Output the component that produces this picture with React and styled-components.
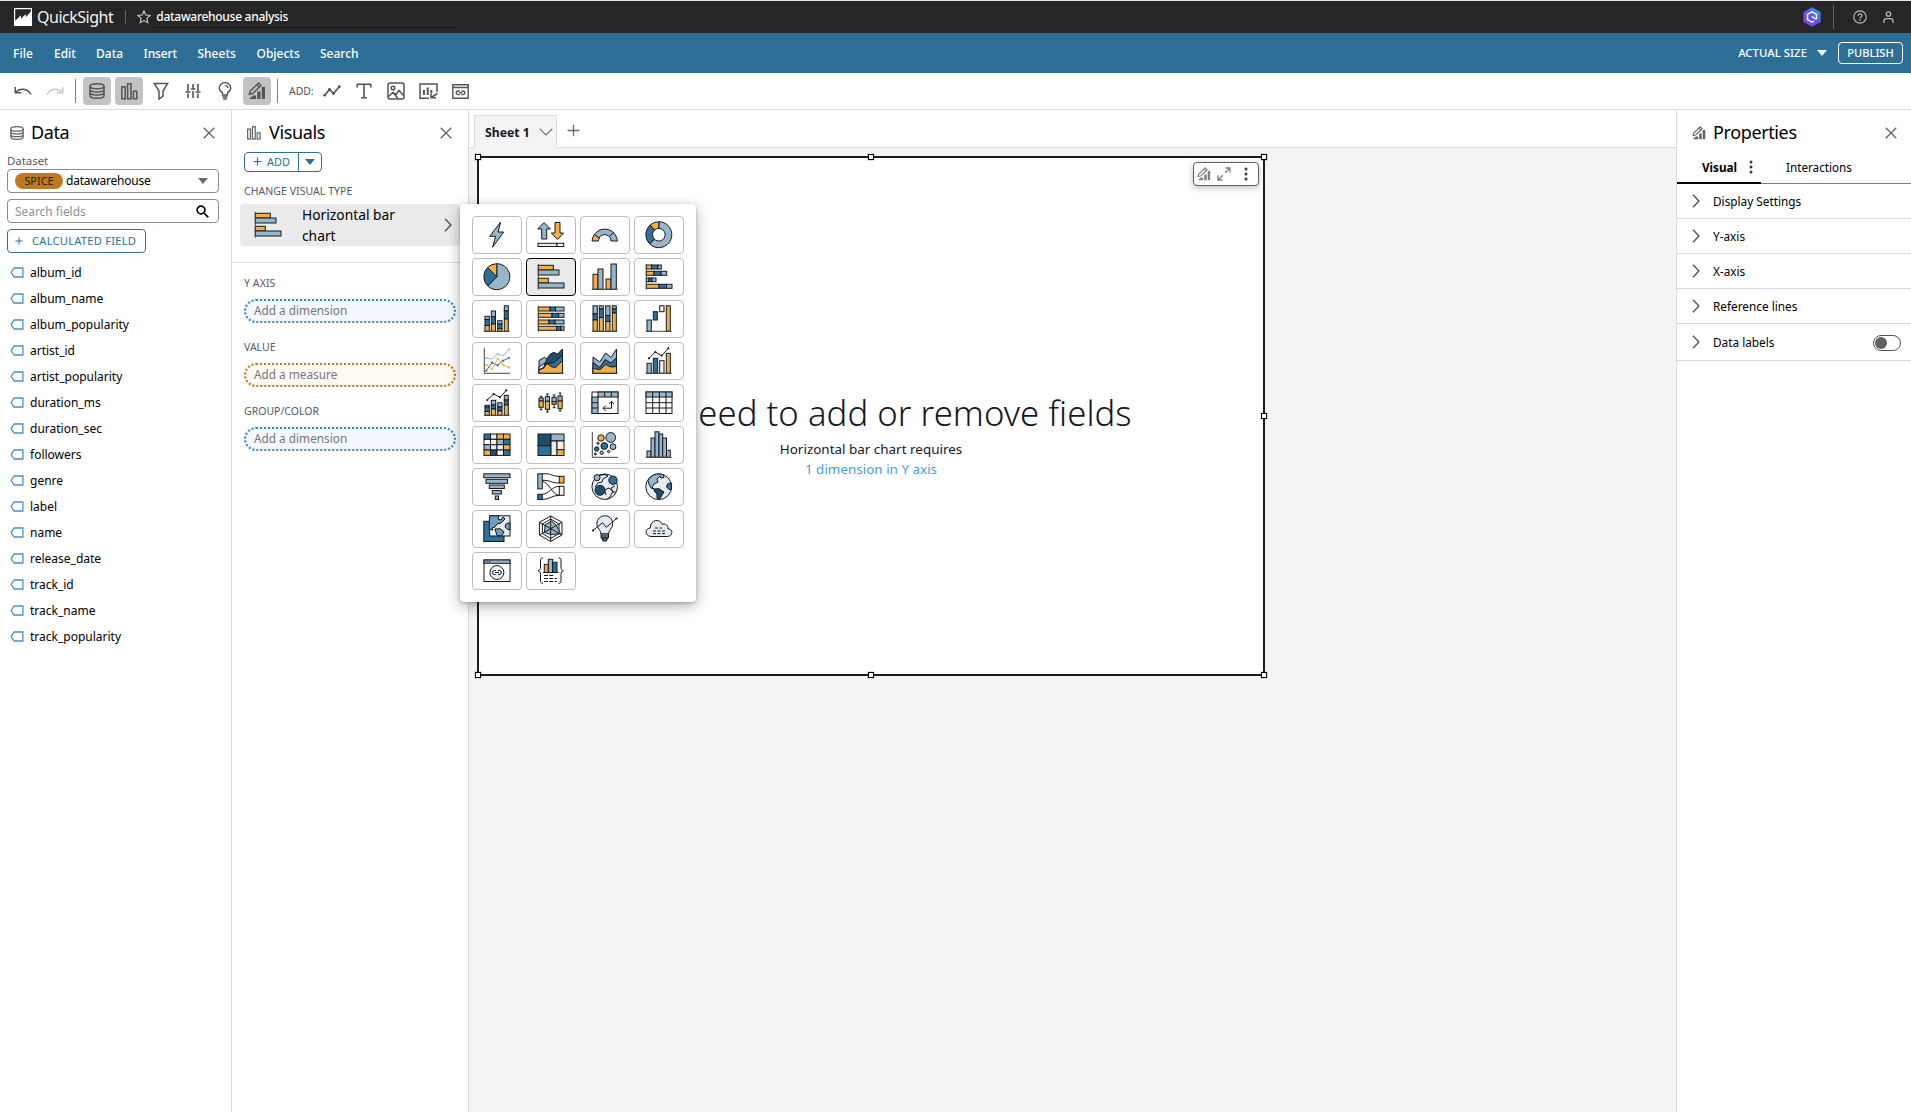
import React from 'react';
import styled, { createGlobalStyle, css } from 'styled-components';

const LIGHT = '#98b6cb';
const DARK = '#2e7098';
const NAVY = '#1f4e6b';
const ORANGE = '#f6ae44';
const CREAM = '#fdf1e4';
const PALE = '#e6edf2';
const INK = '#16191f';
const BLUE = '#2e6f97';

const GlobalStyle = createGlobalStyle`
  * { box-sizing: border-box; }
  body {
    margin: 0;
    font-family: "Noto Sans", "Open Sans", sans-serif;
    font-size: 12px;
    color: #16191f;
    background: #fff;
  }
  svg { display: block; flex: none; }
`;

/* ---------- layout ---------- */
const Page = styled.div`
  height: 1112px;
  display: flex;
  flex-direction: column;
  overflow: hidden;
`;
const Body = styled.div`
  flex: 1;
  min-height: 0;
  display: flex;
`;

/* ---------- top bar ---------- */
const TopBar = styled.header`
  height: 33px;
  flex: none;
  display: flex;
  align-items: center;
  padding: 0 17px 0 14px;
  background: #262626;
  border-top: 1px solid #dfe7e7;
  color: #fff;
`;
const Brand = styled.span`
  margin-left: 5px;
  font-size: 16px;
  line-height: 20px;
  letter-spacing: -0.49px;
  color: #f2f2f2;
`;
const TopDivider = styled.span`
  width: 1px;
  height: ${(p) => p.$h}px;
  background: #666;
  margin: ${(p) => p.$m};
`;
const AnalysisName = styled.span`
  margin-left: 2px;
  width: 304px;
  height: 22px;
  padding-left: 3px;
  font-size: 12px;
  font-weight: 500;
  letter-spacing: -0.28px;
  line-height: 21px;
  border-bottom: 1px solid #141414;
`;
const Spacer = styled.span`
  flex: 1;
`;
const AccountIcons = styled.span`
  display: flex;
  align-items: center;
  gap: 16px;
`;

/* ---------- menu bar ---------- */
const MenuBar = styled.nav`
  height: 40px;
  flex: none;
  display: flex;
  align-items: center;
  padding: 0 8px 0 13px;
  background: ${BLUE};
  color: #fff;
  font-weight: 500;
`;
const MenuItem = styled.span`
  width: ${(p) => p.$w}px;
  font-size: 12px;
  line-height: 18px;
  letter-spacing: ${(p) => p.$ls || 0}px;
  padding-top: 1px;
`;
const ZoomLabel = styled.span`
  font-size: 11.4px;
  line-height: 18px;
`;
const Caret = styled.span`
  width: 0;
  height: 0;
  border-left: ${(p) => p.$s}px solid transparent;
  border-right: ${(p) => p.$s}px solid transparent;
  border-top: ${(p) => p.$s + 1}px solid ${(p) => p.$c};
  margin: ${(p) => p.$m || 0};
`;
const PublishButton = styled.button`
  width: 65px;
  height: 22px;
  padding: 0;
  border: 1px solid #fff;
  border-radius: 4px;
  background: transparent;
  color: #fff;
  font: 500 11.1px/18px "Noto Sans", sans-serif;
`;

/* ---------- tool bar ---------- */
const ToolBar = styled.div`
  height: 37px;
  flex: none;
  display: flex;
  align-items: center;
  padding-left: 9px;
  border-bottom: 1px solid #dcdcdc;
  color: #545454;
`;
const ToolButton = styled.span`
  width: 28px;
  height: 28px;
  margin-right: 4px;
  display: grid;
  place-items: center;
  border-radius: 4px;
  background: ${(p) => (p.$on ? '#c3c3c3' : 'transparent')};
  color: ${(p) => (p.$off ? '#c8c8c8' : '#545454')};
`;
const ToolDivider = styled.span`
  width: 1px;
  height: 24px;
  background: #808080;
  margin: ${(p) => p.$m};
`;
const AddLabel = styled.span`
  width: 29px;
  font-size: 10.4px;
`;

/* ---------- side panels ---------- */
const Panel = styled.section`
  width: ${(p) => p.$w}px;
  flex: none;
  background: #fff;
  border-right: ${(p) => (p.$last ? 0 : '1px solid #dcdcdc')};
  border-left: ${(p) => (p.$last ? '1px solid #dcdcdc' : 0)};
`;
const PanelHead = styled.div`
  height: ${(p) => p.$h || 43}px;
  display: flex;
  align-items: center;
  padding: ${(p) => p.$p};
  color: #5f6368;
`;
const PanelTitle = styled.h2`
  flex: 1;
  margin: 0 0 0 ${(p) => p.$ml}px;
  padding-bottom: 2px;
  font-size: 18px;
  font-weight: 400;
  line-height: 24px;
  letter-spacing: -0.38px;
  color: #000;
`;
const DataBody = styled.div`
  padding: 0 12px 0 7px;
`;
const DatasetLabel = styled.div`
  height: 16px;
  font-size: 11.4px;
  line-height: 16px;
  color: #545b64;
`;
const fieldBox = css`
  display: flex;
  align-items: center;
  height: 24px;
  border: 1px solid #8b8b8b;
  border-radius: 4px;
`;
const DatasetSelect = styled.div`
  ${fieldBox}
  padding: 0 10px 0 7px;
  color: #000;
`;
const SpiceTag = styled.span`
  width: 48px;
  height: 16px;
  border-radius: 8px;
  background: #bd7a20;
  color: #2b1d09;
  font-size: 10.9px;
  line-height: 15px;
  text-align: center;
`;
const DatasetName = styled.span`
  flex: 1;
  margin-left: 3px;
  padding-bottom: 1px;
  font-size: 12px;
  letter-spacing: -0.22px;
`;
const SearchBox = styled.div`
  ${fieldBox}
  margin-top: 6px;
  padding: 0 9px 0 7px;
  justify-content: space-between;
  color: #8d9096;
  font-size: 11.9px;
`;
const CalcButton = styled.button`
  width: 139px;
  height: 24px;
  margin-top: 6px;
  display: flex;
  align-items: center;
  gap: 9px;
  padding: 0 0 1px 7px;
  border: 1px solid ${BLUE};
  border-radius: 4px;
  background: #fff;
  color: ${BLUE};
  font: 400 11.2px "Noto Sans", sans-serif;
  letter-spacing: 0.22px;
`;
const FieldList = styled.ul`
  list-style: none;
  margin: 6px 0 0;
  padding: 0;
`;
const FieldRow = styled.li`
  height: 26px;
  display: flex;
  align-items: center;
  gap: 6px;
  padding-left: 3px;
  font-size: 12px;
  color: #000;
`;

/* ---------- visuals panel ---------- */
const SplitButton = styled.div`
  width: 78px;
  height: 20px;
  margin-left: 12px;
  display: flex;
  border: 1px solid ${BLUE};
  border-radius: 4px;
  color: ${BLUE};
`;
const SplitMain = styled.span`
  width: 54px;
  display: flex;
  align-items: center;
  justify-content: center;
  gap: 5px;
  padding-bottom: 1px;
  border-right: 1px solid ${BLUE};
  font-size: 11px;
`;
const SplitMenu = styled.span`
  flex: 1;
  display: grid;
  place-items: center;
`;
const Caption = styled.div`
  height: 16px;
  margin: ${(p) => p.$m};
  font-size: 10.5px;
  line-height: 16px;
  letter-spacing: ${(p) => p.$ls || 0}px;
  color: #545b64;
`;
const VisualType = styled.div`
  height: 42px;
  margin: 0 8px;
  display: flex;
  align-items: center;
  padding: 0 8px 0 14px;
  border-radius: 4px;
  background: #eaeaea;
  color: #545454;
`;
const VisualTypeName = styled.span`
  flex: 1;
  margin-left: 20px;
  padding-right: 14px;
  font-size: 13.8px;
  line-height: 21px;
  color: #000;
`;
const VisualTop = styled.div`
  height: 111px;
  border-bottom: 1px solid #dcdcdc;
`;
const Well = styled.div`
  height: 24px;
  margin: 0 12px;
  padding-left: 8px;
  border: 2px dotted ${(p) => (p.$measure ? '#c07a1f' : '#3a86c0')};
  border-radius: 12px;
  background: ${(p) => (p.$measure ? '#fffaf2' : '#f3f9fe')};
  color: #737880;
  font-size: 11.8px;
  line-height: 19px;
`;

/* ---------- visual type menu ---------- */
const VisualsPanel = styled(Panel)`
  position: relative;
`;
const TypeMenu = styled.div`
  position: absolute;
  z-index: 5;
  left: 228px;
  top: 94px;
  width: 236px;
  height: 398px;
  padding: 12px;
  display: grid;
  grid-template-columns: repeat(4, 50px);
  grid-auto-rows: 38px;
  gap: 4px;
  align-content: start;
  background: #fff;
  border-radius: 4px;
  box-shadow: 0 4px 14px rgba(0, 0, 0, 0.32), 0 1px 3px rgba(0, 0, 0, 0.2);
`;
const TypeTile = styled.button`
  display: grid;
  place-items: center;
  padding: 0;
  border: 1px solid ${(p) => (p.$selected ? '#000' : '#bdbdbd')};
  border-radius: 4px;
  background: ${(p) => (p.$selected ? '#eaeaea' : '#fff')};
`;

/* ---------- sheet ---------- */
const SheetArea = styled.main`
  flex: 1;
  min-width: 0;
  display: flex;
  flex-direction: column;
  background: #f4f4f4;
`;
const SheetTabs = styled.div`
  height: 38px;
  flex: none;
  display: flex;
  align-items: flex-end;
  padding-left: 5px;
  background: #fff;
  border-bottom: 1px solid #dcdcdc;
  color: #6b6b6b;
`;
const SheetTab = styled.div`
  width: 83px;
  height: 33px;
  margin-bottom: -1px;
  display: flex;
  align-items: center;
  justify-content: space-between;
  padding: 0 3px 0 10px;
  border: 1px solid #dcdcdc;
  border-bottom: 0;
  background: #f4f4f4;
  font-size: 12.2px;
  font-weight: 700;
`;
const SheetTabName = styled.span`
  color: #16191f;
`;
const NewSheet = styled.span`
  width: 32px;
  height: 33px;
  display: grid;
  place-items: center;
`;
const Canvas = styled.div`
  flex: 1;
  padding: 8px;
`;
const VisualFrame = styled.div`
  position: relative;
  width: 788px;
  height: 520px;
  display: flex;
  flex-direction: column;
  align-items: center;
  justify-content: center;
  padding-top: 37px;
  border: 2px solid #1b1d20;
  background: #fff;
`;
const Handle = styled.span`
  position: absolute;
  left: ${(p) => p.$x};
  top: ${(p) => p.$y};
  width: 6px;
  height: 6px;
  margin: -3px 0 0 -3px;
  border: 1px solid #000;
  background: #fff;
  box-shadow: 0 0 0 1px rgba(0, 0, 0, 0.12);
`;
const VisualActions = styled.div`
  position: absolute;
  right: 4px;
  top: 4px;
  width: 66px;
  height: 24px;
  display: flex;
  align-items: center;
  gap: 6px;
  padding-left: 3px;
  border: 1px solid #5f5f5f;
  border-radius: 4px;
  background: #fff;
  color: #808080;
  box-shadow: 0 2px 6px rgba(0, 0, 0, 0.25);
`;
const MoreButton = styled.span`
  margin-left: 7px;
`;
const EmptyTitle = styled.h1`
  margin: 0;
  font-size: 34.7px;
  font-weight: 300;
  line-height: 44px;
  letter-spacing: 0.05px;
`;
const EmptyText = styled.p`
  margin: ${(p) => (p.$link ? 0 : 4)}px 0 0;
  font-size: 13.45px;
  line-height: 20px;
  color: ${(p) => (p.$link ? '#4a9fd8' : '#16191f')};
`;

/* ---------- properties ---------- */
const Tabs = styled.div`
  display: flex;
  height: 31px;
  box-shadow: inset 0 -1px 0 #808080;
`;
const Tab = styled.span`
  width: ${(p) => p.$w}px;
  display: flex;
  align-items: center;
  gap: 12px;
  padding: 0 0 1px 25px;
  font-size: 11.7px;
  font-weight: ${(p) => (p.$active ? 700 : 400)};
  color: #000;
  border-bottom: 2px solid ${(p) => (p.$active ? '#000' : 'transparent')};
`;
const PropRow = styled.div`
  height: ${(p) => p.$h || 35}px;
  display: flex;
  align-items: center;
  padding: 0 10px 0 15px;
  border-bottom: 1px solid #dcdcdc;
  color: #545454;
`;
const PropName = styled.span`
  flex: 1;
  margin-left: 13px;
  padding-bottom: 1px;
  font-size: 11.8px;
  color: #000;
`;
const Toggle = styled.span`
  width: 28px;
  height: 16px;
  margin-top: 1px;
  padding: 1px;
  border: 1px solid #545454;
  border-radius: 8px;
  &::before {
    content: '';
    display: block;
    width: 12px;
    height: 12px;
    border-radius: 6px;
    background: #5f5f5f;
  }
`;

/* ---------- interface icons ---------- */
const Stroke = ({ w, h = w, box, sw = 1.5, children }) => (
  <svg width={w} height={h} viewBox={box || `0 0 ${w} ${h}`} fill="none" stroke="currentColor" strokeWidth={sw}>
    {children}
  </svg>
);
const CloseIcon = () => (
  <Stroke w={12} sw={1.3}><path d="M.7.7 11.3 11.3M11.3.7.7 11.3" /></Stroke>
);
const DatabaseIcon = ({ s }) => (
  <Stroke w={s} box="0 0 16 16">
    <ellipse cx="8" cy="3.3" rx="7" ry="2.5" />
    <path d="M1 3.3v9.4c0 1.4 3.1 2.5 7 2.5s7-1.1 7-2.5V3.3M1 6.5C1 7.9 4.1 9 8 9s7-1.1 7-2.5M1 9.6c0 1.4 3.1 2.5 7 2.5s7-1.1 7-2.5" />
  </Stroke>
);
const BarsIcon = ({ s }) => (
  <Stroke w={s} box="0 0 17 17">
    <rect x=".8" y="3.8" width="3.4" height="12" />
    <rect x="6.6" y=".8" width="3.4" height="15" />
    <rect x="12.4" y="8.3" width="3.4" height="7.5" />
  </Stroke>
);
const EditChartIcon = ({ s }) => (
  <Stroke w={s} box="0 0 18 18" sw={1.4}>
    <path d="M1.3 12.3 2.3 9 10.5 1 13 3.5 4.8 11.5zM8.800 2.700 11.300 5.200" />
    <path fill="currentColor" stroke="none" d="M1 17 5 13.500h3V17zM9.300 9.500h3.200V17H9.300zM13.800 5H17v12h-3.200z" />
  </Stroke>
);
const Chevron = () => (
  <Stroke w={8} h={14} sw={1.4}><path d="M1 .8 6.9 7 1 13.2" /></Stroke>
);
const FieldIcon = () => (
  <Stroke w={14} h={11} sw={1.3}><path d="M4.2 1h8.7v9H4.2L1.1 5.5z" stroke="#4a90c8" /></Stroke>
);
const PlusIcon = ({ s, sw = 1.3 }) => (
  <Stroke w={s} box="0 0 10 10" sw={sw}><path d="M5 .5v9M.5 5h9" /></Stroke>
);
const DotsIcon = () => (
  <svg width="4" height="14" viewBox="0 0 4 14" fill="#3b3b3b">
    <circle cx="2" cy="2" r="1.5" /><circle cx="2" cy="7" r="1.5" /><circle cx="2" cy="12" r="1.5" />
  </svg>
);
const UndoIcon = ({ flip }) => (
  <Stroke w={18} h={11}>
    <path transform={flip ? 'matrix(-1 0 0 1 18 0)' : undefined} d="M1.3 1v5.8h6M1.5 6.500C5.500 2.300 13 1.500 17 8.500" />
  </Stroke>
);
const FilterIcon = () => (
  <Stroke w={16} h={18}><path d="M1.300 1.500h13.400L10 9v5l-4 3V9z" /></Stroke>
);
const SlidersIcon = () => (
  <Stroke w={16} sw={1.6}>
    <path d="M3 1v7M3 10.500V15M.5 9h5M8 1v4.500M8 8v7M5.800 6h4.600M13 1v7M13 10.500V15M10.500 9h5" />
  </Stroke>
);
const BulbIcon = () => (
  <Stroke w={14} h={18} sw={1.4}>
    <path d="M4.500 13V10.800C2.500 9.500 1.300 8 1.300 6A5.600 5.300 0 0 1 12.700 6c0 2-1.200 3.500-3.200 4.800V13zM4.500 15h5M5.200 17h3.600M7.500 3.500c1.500.2 2.500 1.200 2.700 2.500" />
  </Stroke>
);
const LineIcon = () => (
  <Stroke w={18} h={12} sw={1.6}>
    <path d="M1.500 10.500 6.500 4.500 10.500 8.500 16.500 1.500" />
    <g fill="currentColor" stroke="none">
      <circle cx="1.700" cy="10.200" r="1.400" /><circle cx="6.500" cy="4.500" r="1.400" />
      <circle cx="10.500" cy="8.500" r="1.400" /><circle cx="16.300" cy="1.700" r="1.400" />
    </g>
  </Stroke>
);
const TextIcon = () => (
  <Stroke w={16} sw={1.6}><path d="M1.300 4.500V1.300h13.400v3.200M8 1.300v13.400M5 14.700h6" /></Stroke>
);
const ImageIcon = () => (
  <Stroke w={18}>
    <rect x="1" y="1" width="16" height="16" rx="2" /><circle cx="6" cy="6" r="1.800" />
    <path d="M1.500 14.500 6 10.500 9 12.500 12 8.500 16.500 13.500M6 10.500 11 16.500" />
  </Stroke>
);
const InsertChartIcon = () => (
  <Stroke w={19} h={17}>
    <path d="M10 15.300H1V1h17v8M18.500 10.500 12 14.500M12 10.800v3.900h5" />
    <path d="M5 7v5M8.700 4.500V12M12.300 7v3.500" strokeWidth="2" />
  </Stroke>
);
const EmbedIcon = () => (
  <Stroke w={17} h={15} sw={1.4}>
    <path d="M.8.8h15.400v13.400H.8zM.8 3.500h15.400M7.700 7H6a1.800 1.800 0 0 0 0 3.600h1.700M9.300 7H11a1.800 1.800 0 0 1 0 3.600H9.300M6.800 8.800h3.400" />
  </Stroke>
);
const SearchIcon = () => (
  <svg width="13" height="13" viewBox="0 0 13 13" fill="none" stroke="#000" strokeWidth="1.700">
    <circle cx="5" cy="5" r="3.900" /><path d="m8 8 4.300 4.300" />
  </svg>
);
const LogoIcon = () => (
  <svg width="18" height="18" viewBox="0 0 18 18">
    <rect width="18" height="18" fill="#fff" />
    <path fill="#262626" d="M1.200 12.800 7 7.300v3.500L11.800 6v3.200L16.800 3.600V1.200H1.200z" />
  </svg>
);
const StarIcon = () => (
  <Stroke w={14} sw={1.1}><path stroke="#c8c8c8" d="m7 1 1.800 4 4.300.5-3.200 2.900.9 4.300L7 10.600l-3.800 2.100.9-4.300L.9 5.500 5.200 5z" /></Stroke>
);
const AssistantIcon = () => (
  <svg width="18" height="20" viewBox="0 0 18 20">
    <defs>
      <linearGradient id="assistant" x1="1" y1="0" x2="0.2" y2="1">
        <stop offset="0" stopColor="#35a8f8" /><stop offset=".5" stopColor="#5a55f0" /><stop offset="1" stopColor="#8a3cf0" />
      </linearGradient>
    </defs>
    <path fill="url(#assistant)" d="M9 .3 17.600 5v10L9 19.700.4 15V5z" />
    <path fill="none" stroke="#fff" strokeWidth="1.400" d="M13.500 12V7.300L9 4.900 4.500 7.300v5.400L9 15.100l2-1.100M8.700 9.500 13.500 12.300" />
  </svg>
);
const HelpIcon = () => (
  <Stroke w={14} sw={1.2}>
    <g stroke="#b5b5b5"><circle cx="7" cy="7" r="6.200" /><path d="M5.200 5.800C5.200 3.300 8.900 3.300 8.900 5.600 8.900 7 7 7 7 8.500M7 9.600V11" /></g>
  </Stroke>
);
const UserIcon = () => (
  <Stroke w={11} h={12} sw={1.3}>
    <g stroke="#b5b5b5"><circle cx="5.500" cy="3" r="2.200" /><path d="M1 12V10c0-1.500 1-2.300 2.200-2.300h4.600C9 7.700 10 8.500 10 10v2" /></g>
  </Stroke>
);
const ExpandIcon = () => (
  <Stroke w={14} sw={1.3}><path d="M8.500 1H13v4.500M13 1 8.200 5.800M5.500 13H1V8.500M1 13l4.800-4.800" /></Stroke>
);

/* ---------- chart type glyphs, drawn on a 28 unit grid ---------- */
const B = ({ x, y, r, b, f }) => <rect x={x} y={y} width={r - x} height={b - y} fill={f} />;
const Axis = ({ h }) => <path d={h ? 'M1.3.8V26.6' : 'M.8 26.3H26.6'} stroke="#444" />;

const stackH = (rows) => rows.map(([y, b, ...stops], i) => {
  const fills = [ORANGE, DARK, LIGHT];
  return stops.map((s, k) => <B key={`${i}-${k}`} x={k ? stops[k - 1] : 1.3} r={s} y={y} b={b} f={fills[k]} />);
});
const stackV = (cols) => cols.map(([x, r, ...stops], i) => {
  const fills = [LIGHT, DARK, ORANGE];
  return fills.map((f, k) => <B key={`${i}-${k}`} x={x} r={r} y={stops[k]} b={k < 2 ? stops[k + 1] : 26.3} f={f} />);
});
const wedge = (a, b, R, r = 0) => {
  const pt = (deg, q) => {
    const t = ((deg - 90) * Math.PI) / 180;
    return `${(13.8 + q * Math.cos(t)).toFixed(2)} ${(13.7 + q * Math.sin(t)).toFixed(2)}`;
  };
  const big = b - a > 180 ? 1 : 0;
  return r
    ? `M${pt(a, R)}A${R} ${R} 0 ${big} 1 ${pt(b, R)}L${pt(b, r)}A${r} ${r} 0 ${big} 0 ${pt(a, r)}z`
    : `M13.8 13.7L${pt(a, R)}A${R} ${R} 0 ${big} 1 ${pt(b, R)}z`;
};
const Dots = ({ at, r = 1.1, f = INK }) => (
  <g fill={f} stroke="none">{at.map(([x, y]) => <circle key={x} cx={x} cy={y} r={r} />)}</g>
);
const heat = [
  [DARK, PALE, ORANGE, ORANGE],
  ['#fff', CREAM, LIGHT, DARK],
  [LIGHT, PALE, PALE, ORANGE],
  [ORANGE, NAVY, CREAM, DARK],
];

const GLYPHS = {
  auto: <path fill={LIGHT} d="M17.7 1 6.7 15.3h5.8L9.6 26.3 20.6 11H15z" />,
  kpi: (
    <>
      <path fill={LIGHT} d="M7 1.5.8 8h3.9v10h5V8h3.7z" />
      <path fill={ORANGE} d="M18 1.500h5V12h3.500l-6 6.500-6.200-6.500H18z" />
      <B x={1} r={20} y={22.3} b={25.5} f={PALE} /><B x={20} r={26.7} y={22.3} b={25.5} f="#fff" />
    </>
  ),
  gauge: (
    <>
      <path fill={LIGHT} d="M3.300 13.500A12.700 12.700 0 0 1 26.400 20H20A6.300 6.300 0 0 0 8 17.300z" />
      <path fill={ORANGE} d="M3.300 13.500A12.700 12.700 0 0 0 1 20h6.400a6 6 0 0 1 1-3z" />
      <path d="M18.300 15.300 23.200 11.300" />
    </>
  ),
  donut: (
    <>
      <path fill={LIGHT} d={wedge(0, 225, 13, 6.3)} />
      <path fill={DARK} d={wedge(225, 318, 13, 6.3)} />
      <path fill={ORANGE} d={wedge(318, 360, 13, 6.3)} />
    </>
  ),
  pie: (
    <>
      <path fill={LIGHT} d={wedge(0, 225, 13)} />
      <path fill={DARK} d={wedge(225, 315, 13)} />
      <path fill={ORANGE} d={wedge(315, 360, 13)} />
    </>
  ),
  hbar: (
    <>
      <B x={1.3} r={16.3} y={2.3} b={7} f={ORANGE} /><B x={1.3} r={22} y={7} b={12} f={LIGHT} />
      <B x={1.3} r={11.3} y={15.3} b={20} f={ORANGE} /><B x={1.3} r={27} y={20} b={25} f={LIGHT} /><Axis h />
    </>
  ),
  vbar: (
    <>
      <B x={2} r={7} y={11.3} b={26.3} f={ORANGE} /><B x={7} r={12} y={6} b={26.3} f={LIGHT} />
      <B x={15} r={20} y={16} b={26.3} f={ORANGE} /><B x={20} r={25.3} y={1} b={26.3} f={LIGHT} /><Axis />
    </>
  ),
  hstack: <>{stackH([[2, 6, 6.5, 13, 16.3], [8.3, 12.3, 9, 16, 21.7], [15, 18.7, 4, 7, 11], [21.3, 25.3, 14, 21.5, 27]])}<Axis h /></>,
  vstack: <>{stackV([[2, 6.3, 11.3, 14.5, 20.5], [8.3, 12.5, 6, 11.5, 19], [14.7, 19, 15.7, 19, 23.7], [21.3, 25.3, 0.8, 6, 14]])}<Axis /></>,
  hfull: <>{stackH([[2, 6, 13, 18.5, 27], [8.3, 12.3, 15, 21.7, 27], [15, 19, 12, 18, 27], [21.3, 25.3, 19.7, 24, 27]])}<Axis h /></>,
  vfull: <>{stackV([[2, 6.3, 0.8, 9, 15], [8.3, 12.3, 0.8, 4, 12.5], [14.7, 19, 0.8, 10.5, 16.5], [21.3, 25.3, 0.8, 4, 8]])}<Axis /></>,
  waterfall: (
    <>
      <B x={2} r={6.3} y={15} b={26.3} f={LIGHT} /><B x={8.3} r={12.3} y={6.7} b={15} f={DARK} />
      <B x={14.7} r={19} y={0.8} b={6.7} f={CREAM} /><B x={21.3} r={25.3} y={0.8} b={26.3} f={ORANGE} /><Axis />
    </>
  ),
  line: (
    <>
      <path d="M1.300.8V26.300H27" stroke="#444" />
      <path stroke={LIGHT} d="M3.300 11 9 12 14.700 7 20 9 26 2.300" />
      <path stroke={DARK} d="M3.300 23.700 9 15.700 14.700 18.300 20 13.700 26 11" />
      <path stroke={ORANGE} d="M3.300 18 9 22 14.700 11.700 20 17.700 26 20.300" />
      <Dots f={LIGHT} at={[[3.3, 11], [14.7, 7], [26, 2.3]]} />
      <Dots f={DARK} at={[[3.3, 23.7], [9, 15.7], [14.7, 18.3], [20, 13.7], [26, 11]]} />
      <Dots f={ORANGE} at={[[3.3, 18], [9, 22], [14.7, 11.7], [20, 17.7], [26, 20.3]]} />
    </>
  ),
  area: (
    <>
      <path fill={LIGHT} d="M2 26.300V13.500L7.700 10.300 10.500 12.500 16 7 8 17 2 20z" />
      <path fill={NAVY} d="M8 16.500C10 12 12 6 17 5.500L20.500 7 25.500 2V15L19 17.500z" />
      <path fill={DARK} d="M8 16.500 16 16 20 13 25.500 8V20L10 24z" />
      <path fill={CREAM} d="M2 20 8 16 7 20 2 23z" />
      <path fill={ORANGE} d="M2 26.300V23L7 21 10 16.500 15 20 19 20.300 25.500 13.500V26.300z" /><Axis />
    </>
  ),
  areastack: (
    <>
      <path fill={LIGHT} d="M2 26.300V10L8.700 15 14.700 6 20 10.500 25.500 2V26.300z" />
      <path fill={DARK} d="M2 26.300V15.500L9 20.500 14 12.500 20 16 25.500 10.500V26.300z" />
      <path fill={ORANGE} d="M2 26.300V21.300L9 22.700 14.700 17.500 20 20 25.500 19.500V26.300z" /><Axis />
    </>
  ),
  combo: (
    <>
      <B x={2} r={6.3} y={16.3} b={26.3} f={LIGHT} /><B x={8.3} r={12.7} y={11.3} b={26.3} f={DARK} />
      <B x={14.7} r={19} y={13.7} b={26.3} f={CREAM} /><B x={21.3} r={25.3} y={6.3} b={26.3} f={ORANGE} /><Axis />
      <path d="M4 11.300 10.300 5 16.700 8.600 23.300 1.300" />
      <Dots at={[[4, 11.3], [10.3, 5], [16.7, 8.6], [23.3, 1.3]]} />
    </>
  ),
  combostack: (
    <>
      {stackV([[2, 6.3, 16.3, 18, 22.5], [8.3, 12.7, 11.3, 16, 20], [14.7, 19, 13.7, 18, 22], [21.3, 25.3, 6.3, 11, 16]])}<Axis />
      <path d="M4.300 11 10.700 5 17 8.300 23.300 1.300" />
      <Dots at={[[4.3, 11], [10.7, 5], [17, 8.3], [23.3, 1.3]]} />
    </>
  ),
  box: (
    <>
      {[[2, 7.3, 9, 12, 18.3, 20.7], [8.3, 5, 7.7, 12.3, 20.3, 23], [15, 6, 8.3, 12.8, 15.3, 18.7], [21, 4, 7, 12, 19.7, 22]].map(([x, a, t, m, b, e]) => (
        <g key={x}>
          <path d={`M${x + 2.1} ${a}V${e}M${x + 0.7} ${a}h2.8M${x + 0.7} ${e}h2.8`} />
          <B x={x} r={x + 4.2} y={t} b={m} f={LIGHT} /><B x={x} r={x + 4.2} y={m} b={b} f={ORANGE} />
        </g>
      ))}
    </>
  ),
  pivot: (
    <>
      <B x={1} r={27} y={3} b={24.5} f="#fff" /><B x={7} r={27} y={3} b={8} f={LIGHT} /><B x={1} r={7} y={8} b={24.5} f={LIGHT} />
      <path d="M13.700 3v5M20.300 3v5M1 13.700h6M1 19h6" />
      <path d="M20.500 12.500v6.700H12M18 15l2.500-2.700L23 15M14.700 16.500 12 19.200l2.700 2.700" />
    </>
  ),
  table: (
    <>
      <B x={1} r={27} y={3} b={24.5} f="#fff" /><B x={1} r={27} y={3} b={8} f={LIGHT} />
      <path d="M7.700 3v21.500M14.300 3v21.500M21 3v21.500M1 13.700h26M1 19h26" />
    </>
  ),
  heat: <>{heat.map((row, i) => row.map((f, k) => <B key={`${i}${k}`} x={1 + k * 6.5} r={7.5 + k * 6.5} y={3 + i * 5.35} b={8.35 + i * 5.35} f={f} />))}</>,
  tree: (
    <>
      <B x={1} r={14} y={3} b={14.7} f={NAVY} /><B x={1} r={14} y={14.7} b={24.5} f={DARK} /><B x={14} r={27} y={3} b={10} f={LIGHT} />
      <B x={14} r={20} y={10} b={24.5} f={PALE} /><B x={20} r={27} y={10} b={18.7} f={CREAM} /><B x={20} r={27} y={18.7} b={24.5} f={ORANGE} />
    </>
  ),
  scatter: (
    <>
      <path d="M1.300.8V26.300H27" stroke="#444" />
      {[[10, 7, 3.2, ORANGE], [19.7, 6.5, 4.9, LIGHT], [7, 12.3, 1.1, ORANGE], [13.3, 15, 3.4, DARK], [22, 15.7, 2.9, LIGHT], [5.7, 18, 2.2, DARK], [10.7, 21.7, 1.7, LIGHT], [17.7, 20.5, 1.2, ORANGE], [4.3, 23, 1, ORANGE]].map(([x, y, r, f]) => (
        <circle key={x} cx={x} cy={y} r={r} fill={f} />
      ))}
    </>
  ),
  histogram: (
    <>
      {[[2, 6, 20], [6, 10, 7], [10, 14, 0.8], [14, 17.7, 3], [17.7, 21.5, 7], [21.5, 25.3, 19.3]].map(([x, r, y]) => <B key={x} x={x} r={r} y={y} b={26.3} f={LIGHT} />)}
      <Axis />
    </>
  ),
  funnel: (
    <>
      <B x={0.8} r={27} y={0.8} b={4.7} f={LIGHT} /><B x={3} r={24.5} y={6.3} b={10.3} f={LIGHT} /><B x={6.3} r={21.3} y={12} b={15.5} f={LIGHT} />
      <B x={9.3} r={18.3} y={17.5} b={21} f={LIGHT} /><B x={12.3} r={15.5} y={23} b={26.5} f={LIGHT} />
    </>
  ),
  sankey: (
    <>
      <path d="M5.300.8H10C14 .8 15 3.300 22.300 3.300M5.300 7.300C13 7 14 10 22.300 10M5.300 8.500C12 9 15 22 22.300 22.300M5.300 21.300C12 21 15 13.300 22.300 13.300M5.300 26.500C12 26.500 15 22.300 22.300 22.300" />
      <B x={0.8} r={5.3} y={0.8} b={15.8} f={LIGHT} /><B x={0.8} r={5.3} y={21.3} b={26.6} f={DARK} />
      <B x={22.3} r={27} y={3.3} b={10} f={ORANGE} /><B x={22.3} r={27} y={13.3} b={22.3} f={CREAM} />
    </>
  ),
  points: (
    <>
      <circle cx="13.700" cy="13.700" r="12.800" fill={PALE} />
      <path d="M8 2.500 13 1.500 17 3 12 6 11 9 7 10 4 14M15 22 13.500 17 18 15 22 18 19 24 16 26M24 13 20 15 22 19 25 19" />
      <circle cx="6" cy="4.700" r="3.100" fill={LIGHT} /><circle cx="22" cy="7.300" r="4.200" fill={DARK} /><circle cx="9" cy="17.300" r="5" fill={NAVY} />
    </>
  ),
  globe: (
    <>
      <circle cx="13.700" cy="13.700" r="12.900" fill={PALE} />
      <path fill={LIGHT} d="M3 7.500C5 3.500 9 1 13 1l5 .5 1 3-3 .5-1-2-3 3 1 3-4 2-2 3 2 2-3-1-2-4z" />
      <path fill={NAVY} d="M9 16 14 15.700 19 19 17 22 14.500 26.500 12 25 12 21 9.500 18.500z" />
      <path fill={DARK} d="M26 9.500 22.500 11 21.500 14 24 16.500 26.300 16.500 26.600 13z" />
    </>
  ),
  layers: (
    <>
      <B x={0.8} r={21} y={6.3} b={26.5} f={DARK} /><B x={6.7} r={27} y={0.8} b={21} f={PALE} />
      <path fill="#6e9cba" d="M6.700.8H16L15 4l3 1 2-3 2 2-4 4-4 1-2 3-3 1 1 2-4-1zM12 14l5-.3 4 3-2 4h-5zM27 7.500 23 9l-1 3 2.500 2.500H27z" />
    </>
  ),
  radar: (
    <>
      <path fill="#fff" d="M13.700 1 25 7.300V20L13.700 26.500 2.400 20V7.300z" />
      <path fill="#fff" d="M13.700 4 22 9V18.500L13.700 23.500 5.400 18.500V9z" />
      <path fill={LIGHT} d="M14.500 6 19.500 10.500 23.500 18.800 13.700 19.500 7.500 17.500 8 10z" />
      <path d="M13.700 1v25.500M2.400 7.300 25 20M25 7.300 2.400 20" />
    </>
  ),
  insight: (
    <>
      <path fill={PALE} d="M10 19C10 15 5.800 13.500 5.800 8.700a8 8 0 0 1 16 0C21.800 13.500 17.500 15 17.500 19z" />
      <path fill={LIGHT} d="M10 19h7.500v4H10z" /><path fill={DARK} d="M11 23h5.500l-1 3h-3.500z" />
      <path d="M10 21h7.500" />
      <path d="M2 15.500 11.500 7.700 15.300 12.300 25.500 3.500" />
      <Dots at={[[2, 15.5], [25.5, 3.5]]} />
    </>
  ),
  cloud: (
    <>
      <path fill={PALE} d="M6 21.500C-.5 21-.3 13.500 5.300 13 5 4.500 15 3 17.300 9.500 20.500 8 23.500 10.500 22.800 13.700 28.500 14 28 21.300 22.500 21.500z" />
      <path strokeDasharray="3 1.500" d="M10 13h7M8 16h12M8 18.600h12" />
    </>
  ),
  embed: (
    <>
      <B x={1} r={27} y={3} b={24.5} f="#fff" /><B x={1} r={27} y={3} b={6.3} f={LIGHT} />
      <path d="M2.500 4.600h5" strokeDasharray="1 1" />
      <circle cx="13.900" cy="15.500" r="7" fill={PALE} />
      <path d="M12.800 13.500h-1.300a2 2 0 0 0 0 4h1.300M15 13.500h1.300a2 2 0 0 1 0 4H15M12 15.500h3.800" />
    </>
  ),
  custom: (
    <>
      <B x={7.3} r={11.3} y={7.3} b={15.5} f={ORANGE} /><B x={11.3} r={15.7} y={2.3} b={15.5} f={LIGHT} /><B x={15.7} r={20} y={5.3} b={15.5} f={DARK} />
      <path d="M6 15.500h15.500" />
      <path strokeDasharray="4 1.300" d="M7 18.500h10M7 21.500h13M7 24.500h13" />
      <path d="M6 1C3.500 1 3.500 2 3.500 4v6c0 2-.5 3.500-2.500 3.700C3 14 3.500 15.500 3.500 17.500V23c0 2 0 3.300 2.500 3.300M21.500 1C24 1 24 2 24 4v6c0 2 .5 3.500 2.500 3.700C24.500 14 24 15.500 24 17.500V23c0 2 0 3.300-2.500 3.300" />
    </>
  ),
};

const Glyph = ({ name }) => (
  <svg width="28" height="28" viewBox="0 0 28 28" fill="none" stroke={INK} strokeWidth="1">
    {GLYPHS[name]}
  </svg>
);

/* ---------- data ---------- */
const MENU = [['File', 41, 0.1], ['Edit', 42, 0], ['Data', 47.5, 0], ['Insert', 54, -0.1], ['Sheets', 59, 0], ['Objects', 63.5, 0], ['Search', 60, 0]];
const FIELDS = ['album_id', 'album_name', 'album_popularity', 'artist_id', 'artist_popularity', 'duration_ms', 'duration_sec', 'followers', 'genre', 'label', 'name', 'release_date', 'track_id', 'track_name', 'track_popularity'];
const SETTINGS = ['Display Settings', 'Y-axis', 'X-axis', 'Reference lines'];
const HANDLES = [['-1px', '-1px'], ['50%', '-1px'], ['785px', '-1px'], ['785px', '50%'], ['785px', '517px'], ['50%', '517px'], ['-1px', '517px'], ['-1px', '50%']];

export default function App() {
  return (
    <Page>
      <GlobalStyle />
      <TopBar>
        <LogoIcon />
        <Brand>QuickSight</Brand>
        <TopDivider $h={14} $m="0 11px 0 12px" />
        <StarIcon />
        <AnalysisName>datawarehouse analysis</AnalysisName>
        <Spacer />
        <AssistantIcon />
        <TopDivider $h={24} $m="0 19px 0 12px" />
        <AccountIcons><HelpIcon /><UserIcon /></AccountIcons>
      </TopBar>

      <MenuBar>
        {MENU.map(([label, w, ls]) => <MenuItem key={label} $w={w} $ls={ls}>{label}</MenuItem>)}
        <Spacer />
        <ZoomLabel>ACTUAL SIZE</ZoomLabel>
        <Caret $s={5} $c="#fff" $m="0 11px 0 10px" />
        <PublishButton>PUBLISH</PublishButton>
      </MenuBar>

      <ToolBar>
        <ToolButton><UndoIcon /></ToolButton>
        <ToolButton $off><UndoIcon flip /></ToolButton>
        <ToolDivider $m="0 7px 0 2px" />
        <ToolButton $on><DatabaseIcon s={16} /></ToolButton>
        <ToolButton $on><BarsIcon s={17} /></ToolButton>
        <ToolButton><FilterIcon /></ToolButton>
        <ToolButton><SlidersIcon /></ToolButton>
        <ToolButton><BulbIcon /></ToolButton>
        <ToolButton $on><EditChartIcon s={18} /></ToolButton>
        <ToolDivider $m="0 11px 0 2px" />
        <AddLabel>ADD:</AddLabel>
        <ToolButton><LineIcon /></ToolButton>
        <ToolButton><TextIcon /></ToolButton>
        <ToolButton><ImageIcon /></ToolButton>
        <ToolButton><InsertChartIcon /></ToolButton>
        <ToolButton><EmbedIcon /></ToolButton>
      </ToolBar>

      <Body>
        <Panel $w={232}>
          <PanelHead $p="2px 16px 0 10px">
            <DatabaseIcon s={14} />
            <PanelTitle $ml={7}>Data</PanelTitle>
            <CloseIcon />
          </PanelHead>
          <DataBody>
            <DatasetLabel>Dataset</DatasetLabel>
            <DatasetSelect>
              <SpiceTag>SPICE</SpiceTag>
              <DatasetName>datawarehouse</DatasetName>
              <Caret $s={5} $c="#6b6b6b" />
            </DatasetSelect>
            <SearchBox>Search fields<SearchIcon /></SearchBox>
            <CalcButton><PlusIcon s={8} />CALCULATED FIELD</CalcButton>
            <FieldList>
              {FIELDS.map((f) => <FieldRow key={f}><FieldIcon />{f}</FieldRow>)}
            </FieldList>
          </DataBody>
        </Panel>

        <VisualsPanel $w={237}>
          <PanelHead $h={42} $p="3px 16px 0 15px">
            <BarsIcon s={14} />
            <PanelTitle $ml={8}>Visuals</PanelTitle>
            <CloseIcon />
          </PanelHead>
          <VisualTop>
            <SplitButton>
              <SplitMain><PlusIcon s={9} />ADD</SplitMain>
              <SplitMenu><Caret $s={5} $c={BLUE} /></SplitMenu>
            </SplitButton>
            <Caption $m="11px 0 5px 12px" $ls={0.05}>CHANGE VISUAL TYPE</Caption>
            <VisualType>
              <Glyph name="hbar" />
              <VisualTypeName>Horizontal bar chart</VisualTypeName>
              <Chevron />
            </VisualType>
          </VisualTop>
          <Caption $m="12px 0 8px 12px" $ls={0.1}>Y AXIS</Caption>
          <Well>Add a dimension</Well>
          <Caption $m="16px 0 8px 12px">VALUE</Caption>
          <Well $measure>Add a measure</Well>
          <Caption $m="16px 0 8px 12px">GROUP/COLOR</Caption>
          <Well>Add a dimension</Well>
          <TypeMenu>
            {Object.keys(GLYPHS).map((name) => (
              <TypeTile key={name} $selected={name === 'hbar'}><Glyph name={name} /></TypeTile>
            ))}
          </TypeMenu>
        </VisualsPanel>

        <SheetArea>
          <SheetTabs>
            <SheetTab>
              <SheetTabName>Sheet 1</SheetTabName>
              <Stroke w={14} h={8} sw={1.2}><path d="M.8.8 7 7 13.200.8" /></Stroke>
            </SheetTab>
            <NewSheet><PlusIcon s={13} sw={1} /></NewSheet>
          </SheetTabs>
          <Canvas>
            <VisualFrame>
              <EmptyTitle>You need to add or remove fields</EmptyTitle>
              <EmptyText>Horizontal bar chart requires</EmptyText>
              <EmptyText $link>1 dimension in Y axis</EmptyText>
              <VisualActions>
                <EditChartIcon s={14} />
                <ExpandIcon />
                <MoreButton><DotsIcon /></MoreButton>
              </VisualActions>
              {HANDLES.map(([x, y]) => <Handle key={x + y} $x={x} $y={y} />)}
            </VisualFrame>
          </Canvas>
        </SheetArea>

        <Panel $w={235} $last>
          <PanelHead $p="2px 14px 0 15px">
            <EditChartIcon s={14} />
            <PanelTitle $ml={7}>Properties</PanelTitle>
            <CloseIcon />
          </PanelHead>
          <Tabs>
            <Tab $w={84} $active>Visual<DotsIcon /></Tab>
            <Tab $w={150}>Interactions</Tab>
          </Tabs>
          {SETTINGS.map((name) => <PropRow key={name}><Chevron /><PropName>{name}</PropName></PropRow>)}
          <PropRow $h={37}><Chevron /><PropName>Data labels</PropName><Toggle /></PropRow>
        </Panel>
      </Body>
    </Page>
  );
}
